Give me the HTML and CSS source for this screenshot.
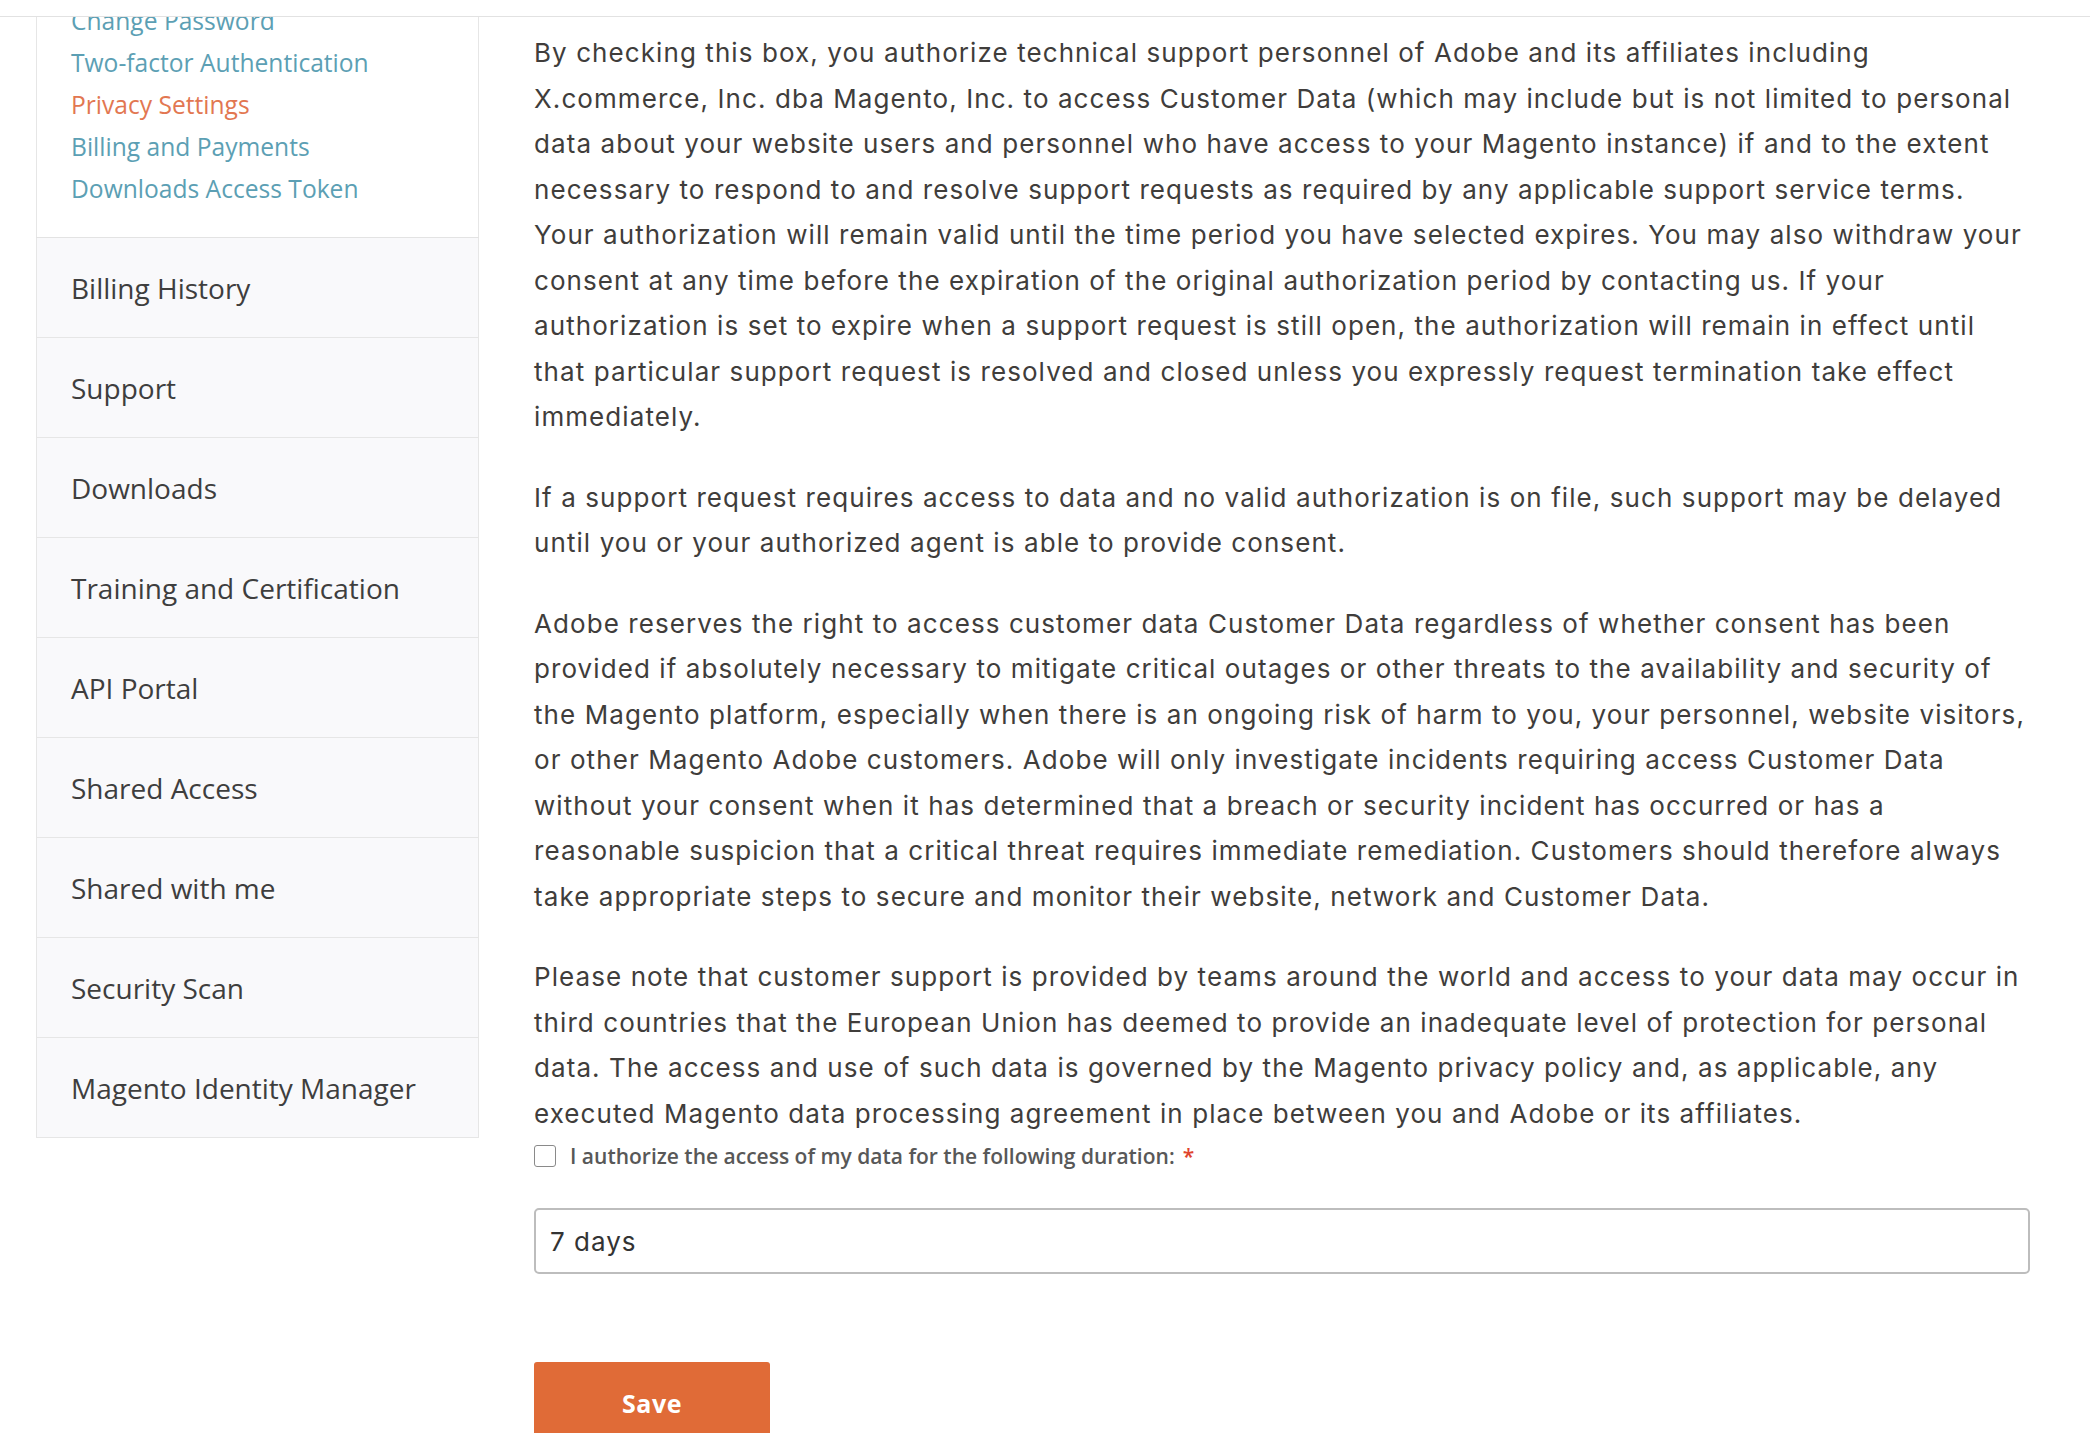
FILE: index.html
```html
<!DOCTYPE html>
<html lang="en">
<head>
<meta charset="utf-8">
<title>Privacy Settings</title>
<link rel="stylesheet" href="styles.css">
</head>
<body>
<div class="topbar"></div>
<div class="page">
  <aside class="sidebar">
    <ul class="sublinks">
      <li><a class="link">Change Password</a></li>
      <li><a class="link">Two-factor Authentication</a></li>
      <li><a class="link current">Privacy Settings</a></li>
      <li><a class="link">Billing and Payments</a></li>
      <li><a class="link">Downloads Access Token</a></li>
    </ul>
    <ul class="menu">
      <li class="menu-item">Billing History</li>
      <li class="menu-item">Support</li>
      <li class="menu-item">Downloads</li>
      <li class="menu-item">Training and Certification</li>
      <li class="menu-item">API Portal</li>
      <li class="menu-item">Shared Access</li>
      <li class="menu-item">Shared with me</li>
      <li class="menu-item">Security Scan</li>
      <li class="menu-item">Magento Identity Manager</li>
    </ul>
  </aside>
  <main class="content">
    <p class="para">By checking this box, you authorize technical support personnel of Adobe and its affiliates including X.commerce, Inc. dba Magento, Inc. to access Customer Data (which may include but is not limited to personal data about your website users and personnel who have access to your Magento instance) if and to the extent necessary to respond to and resolve support requests as required by any applicable support service terms.<br>Your authorization will remain valid until the time period you have selected expires. You may also withdraw your consent at any time before the expiration of the original authorization period by contacting us. If your authorization is set to expire when a support request is still open, the authorization will remain in effect until that particular support request is resolved and closed unless you expressly request termination take effect immediately.</p>
    <p class="para">If a support request requires access to data and no valid authorization is on file, such support may be delayed until you or your authorized agent is able to provide consent.</p>
    <p class="para">Adobe reserves the right to access customer data Customer Data regardless of whether consent has been provided if absolutely necessary to mitigate critical outages or other threats to the availability and security of the Magento platform, especially when there is an ongoing risk of harm to you, your personnel, website visitors, or other Magento Adobe customers. Adobe will only investigate incidents requiring access Customer Data without your consent when it has determined that a breach or security incident has occurred or has a reasonable suspicion that a critical threat requires immediate remediation. Customers should therefore always take appropriate steps to secure and monitor their website, network and Customer Data.</p>
    <p class="para last">Please note that customer support is provided by teams around the world and access to your data may occur in third countries that the European Union has deemed to provide an inadequate level of protection for personal data. The access and use of such data is governed by the Magento privacy policy and, as applicable, any executed Magento data processing agreement in place between you and Adobe or its affiliates.</p>
    <label class="consent">
      <input type="checkbox" class="check">
      <span class="consent-text">I authorize the access of my data for the following duration:</span>
      <span class="required">*</span>
    </label>
    <div class="select">7 days</div>
    <button class="save" type="button">Save</button>
  </main>
</div>
</body>
</html>
```

FILE: styles.css
```css
html, body {
  margin: 0;
  padding: 0;
  background: #ffffff;
  overflow: hidden;
}

body {
  width: 2090px;
  height: 1433px;
}

.topbar {
  position: fixed;
  top: 0;
  left: 0;
  right: 0;
  height: 16px;
  background: #ffffff;
  border-bottom: 1px solid #e2e2e2;
  z-index: 10;
}

.page {
  display: flex;
  align-items: flex-start;
  padding-left: 36px;
}

.sidebar {
  width: 443px;
  flex: none;
  font-family: "Open Sans", sans-serif;
}

.sublinks {
  list-style: none;
  margin: 0;
  padding: 0 0 27px 34px;
  border-left: 1px solid #e6e6e6;
  border-right: 1px solid #e6e6e6;
  background: #ffffff;
}

.sublinks li {
  line-height: 42px;
  font-size: 24.6px;
}

.link {
  color: #5c9fb4;
  text-decoration: none;
}

.link.current {
  color: #e27751;
}

.menu {
  list-style: none;
  margin: 0;
  padding: 0;
  border-top: 1px solid #e3e3e3;
}

.menu-item {
  height: 99px;
  display: flex;
  align-items: center;
  padding-left: 34px;
  font-size: 28px;
  color: #3e3e3e;
  background: #f9f9fb;
  border: 1px solid #e6e6e6;
  border-top: none;
}

.content {
  margin-left: 55px;
  width: 1496px;
  padding-top: 30px;
  font-family: "Inter", sans-serif;
  color: #403d3b;
}

.para {
  margin: 0 0 35px 0;
  font-size: 26px;
  letter-spacing: 1.08px;
  line-height: 45.5px;
}

.para.last {
  margin-bottom: 6px;
}

.consent {
  display: flex;
  align-items: center;
  height: 28px;
  font-family: "Open Sans", sans-serif;
  font-weight: 600;
  font-size: 21px;
  color: #585858;
}

.check {
  appearance: none;
  -webkit-appearance: none;
  width: 22px;
  height: 22px;
  margin: 0 14px 0 0;
  border: 1.5px solid #8a8a8a;
  border-radius: 3px;
  background: #ffffff;
  box-sizing: border-box;
}

.required {
  color: #e0442d;
  margin-left: 8px;
}

.select {
  margin-top: 38px;
  height: 66px;
  box-sizing: border-box;
  border: 2px solid #bdbdbd;
  border-radius: 5px;
  display: flex;
  align-items: center;
  padding-left: 14px;
  font-size: 26px;
  letter-spacing: 1px;
  color: #333333;
}

.save {
  display: block;
  margin-top: 88px;
  width: 236px;
  height: 82px;
  border: none;
  border-radius: 3px;
  background: #e06b37;
  color: #ffffff;
  font-family: "Open Sans", sans-serif;
  font-weight: 700;
  font-size: 25px;
  letter-spacing: 0.5px;
}
```
